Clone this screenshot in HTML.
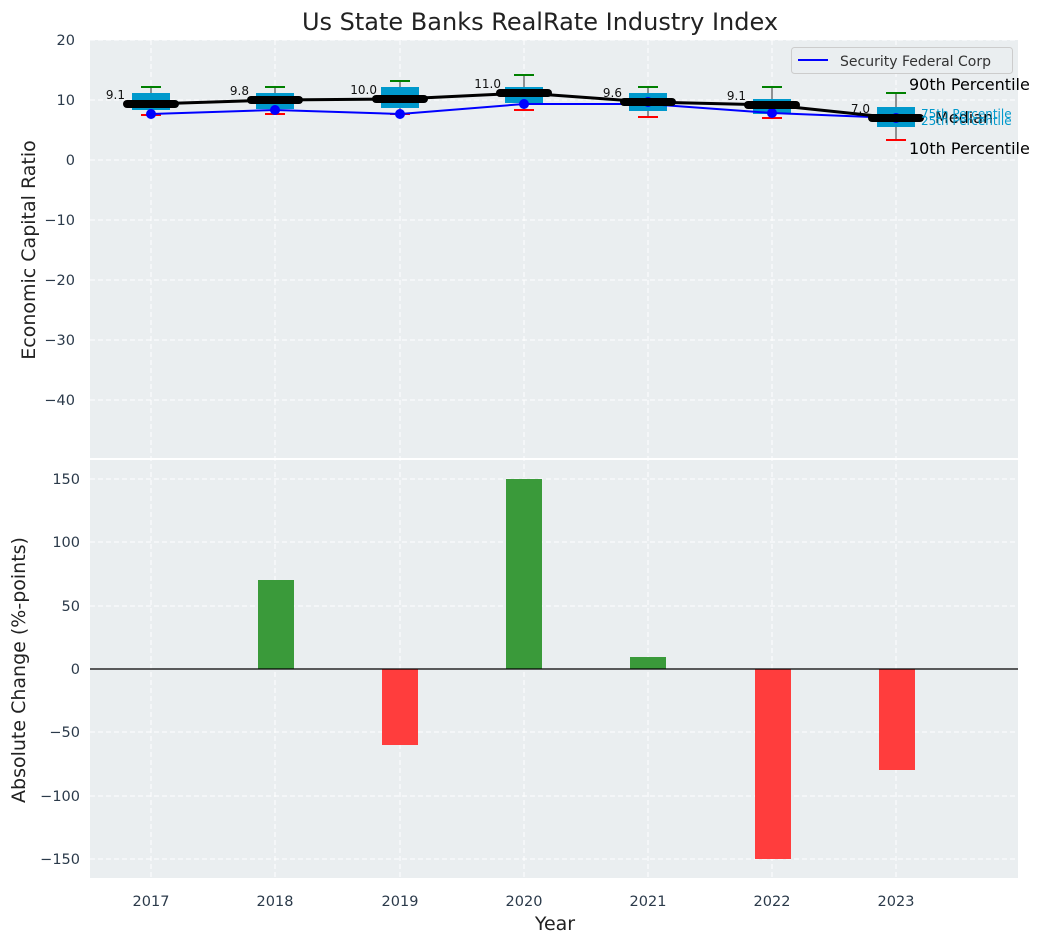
<!DOCTYPE html><html><head><style>body{margin:0;background:#fff}svg{display:block;font-family:"DejaVu Sans","Liberation Sans",sans-serif}</style></head><body>
<svg width="1044" height="942" viewBox="0 0 1044 942">
<rect width="1044" height="942" fill="#fff"/>
<text x="540" y="30" font-size="24" text-anchor="middle" fill="#222">Us State Banks RealRate Industry Index</text>
<rect x="90" y="40" width="928" height="418" fill="#eaeef0"/>
<rect x="90" y="460" width="928" height="418" fill="#eaeef0"/>
<g stroke="#fff" stroke-dasharray="5,3" stroke-width="1">
<line x1="90" x2="1018" y1="40" y2="40"/><line x1="90" x2="1018" y1="100" y2="100"/><line x1="90" x2="1018" y1="160" y2="160"/><line x1="90" x2="1018" y1="220" y2="220"/><line x1="90" x2="1018" y1="280" y2="280"/><line x1="90" x2="1018" y1="340" y2="340"/><line x1="90" x2="1018" y1="400" y2="400"/>
<line x1="90" x2="1018" y1="479" y2="479"/><line x1="90" x2="1018" y1="542" y2="542"/><line x1="90" x2="1018" y1="606" y2="606"/><line x1="90" x2="1018" y1="732" y2="732"/><line x1="90" x2="1018" y1="796" y2="796"/><line x1="90" x2="1018" y1="859" y2="859"/>
<g id="v"><line x1="151" x2="151" y1="40" y2="878"/><line x1="275" x2="275" y1="40" y2="878"/><line x1="400" x2="400" y1="40" y2="878"/><line x1="524" x2="524" y1="40" y2="878"/><line x1="648" x2="648" y1="40" y2="878"/><line x1="772" x2="772" y1="40" y2="878"/><line x1="896" x2="896" y1="40" y2="878"/></g>
</g>
<g font-size="14.5" fill="#2b3a4a" text-anchor="end">
<text x="75" y="45">20</text><text x="75" y="105">10</text><text x="75" y="165">0</text><text x="75" y="225">−10</text><text x="75" y="285">−20</text><text x="75" y="345">−30</text><text x="75" y="405">−40</text>
<text x="80" y="484">150</text><text x="80" y="547">100</text><text x="80" y="611">50</text><text x="80" y="674">0</text><text x="80" y="737">−50</text><text x="80" y="801">−100</text><text x="80" y="864">−150</text>
</g>
<g font-size="14.5" fill="#2b3a4a" text-anchor="middle">
<text x="151" y="906">2017</text><text x="275" y="906">2018</text><text x="400" y="906">2019</text><text x="524" y="906">2020</text><text x="648" y="906">2021</text><text x="772" y="906">2022</text><text x="896" y="906">2023</text>
</g>
<text x="555" y="930" font-size="19" text-anchor="middle" fill="#222">Year</text>
<text transform="translate(35,250) rotate(-90)" font-size="19" text-anchor="middle" fill="#222">Economic Capital Ratio</text>
<text transform="translate(25,670) rotate(-90)" font-size="19" text-anchor="middle" fill="#222">Absolute Change (%-points)</text>
<g stroke="#333" stroke-width="1">
<line x1="151" x2="151" y1="87" y2="115"/><line x1="275" x2="275" y1="87" y2="114"/><line x1="400" x2="400" y1="81" y2="114"/><line x1="524" x2="524" y1="75" y2="110"/><line x1="648" x2="648" y1="87" y2="117"/><line x1="772" x2="772" y1="87" y2="118"/><line x1="896" x2="896" y1="93" y2="140"/>
</g>
<g fill="#0099cc">
<rect x="132" y="93" width="38" height="17"/><rect x="256" y="93" width="38" height="16"/><rect x="381" y="87" width="38" height="21"/><rect x="505" y="87" width="38" height="16"/><rect x="629" y="93" width="38" height="18"/><rect x="753" y="99" width="38" height="15"/><rect x="877" y="107" width="38" height="20"/>
</g>
<g stroke="green" stroke-width="2">
<line x1="141" x2="161" y1="87" y2="87"/><line x1="265" x2="285" y1="87" y2="87"/><line x1="390" x2="410" y1="81" y2="81"/><line x1="514" x2="534" y1="75" y2="75"/><line x1="638" x2="658" y1="87" y2="87"/><line x1="762" x2="782" y1="87" y2="87"/><line x1="886" x2="906" y1="93" y2="93"/>
</g>
<g stroke="red" stroke-width="2">
<line x1="141" x2="161" y1="115" y2="115"/><line x1="265" x2="285" y1="114" y2="114"/><line x1="390" x2="410" y1="114" y2="114"/><line x1="514" x2="534" y1="110" y2="110"/><line x1="638" x2="658" y1="117" y2="117"/><line x1="762" x2="782" y1="118" y2="118"/><line x1="886" x2="906" y1="140" y2="140"/>
</g>
<polyline fill="none" stroke="blue" stroke-width="2" points="151,114 275,110 400,114 524,104 648,104 772,113 896,118"/>
<g fill="blue"><circle cx="151" cy="114" r="5"/><circle cx="275" cy="110" r="5"/><circle cx="400" cy="114" r="5"/><circle cx="524" cy="104" r="5"/><circle cx="648" cy="102" r="5"/><circle cx="772" cy="113" r="5"/><circle cx="896" cy="118" r="5"/></g>
<polyline fill="none" stroke="#000" stroke-width="3" points="151,104 275,100 400,99 524,93 648,102 772,105 896,118"/>
<g stroke="#000" stroke-width="8" stroke-linecap="round">
<line x1="127" x2="175" y1="104" y2="104"/><line x1="251" x2="299" y1="100" y2="100"/><line x1="376" x2="424" y1="99" y2="99"/><line x1="500" x2="548" y1="93" y2="93"/><line x1="624" x2="672" y1="102" y2="102"/><line x1="748" x2="796" y1="105" y2="105"/><line x1="872" x2="920" y1="118" y2="118"/>
</g>
<g font-size="12" fill="#111" text-anchor="end">
<text x="125" y="99">9.1</text><text x="249" y="95">9.8</text><text x="377" y="94">10.0</text><text x="501" y="88">11.0</text><text x="622" y="97">9.6</text><text x="746" y="100">9.1</text><text x="870" y="113">7.0</text>
</g>
<g font-size="16" fill="#000"><text x="909" y="90">90th Percentile</text><text x="935" y="123">Median</text><text x="909" y="154">10th Percentile</text></g>
<g font-size="12" fill="#0099cc"><text x="921" y="118">75th Percentile</text><text x="921" y="125">25th Percentile</text></g>
<rect x="791.5" y="47.5" width="221" height="26" rx="3" fill="#eaeef0" stroke="#ccc"/>
<line x1="798" x2="828" y1="60" y2="60" stroke="blue" stroke-width="2"/>
<text x="840" y="66" font-size="14" fill="#333">Security Federal Corp</text>
<g fill="#3a9a3a"><rect x="258" y="580" width="36" height="89"/><rect x="506" y="479" width="36" height="190"/><rect x="630" y="657" width="36" height="12"/></g>
<g fill="#ff3d3d"><rect x="382" y="669" width="36" height="76"/><rect x="755" y="669" width="36" height="190"/><rect x="879" y="669" width="36" height="101"/></g>
<line x1="90" x2="1018" y1="669" y2="669" stroke="#000" stroke-width="1.3"/>
</svg></body></html>
